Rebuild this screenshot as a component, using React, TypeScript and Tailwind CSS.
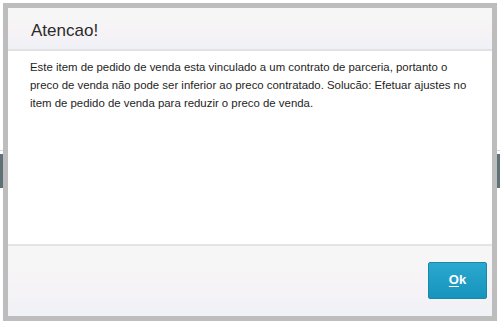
export default function App() {
  return (
    <div className="relative w-[500px] h-[324px] overflow-hidden bg-white font-['Liberation_Sans',Arial,sans-serif]">
      {/* page behind the modal */}
      <div className="flex flex-col pt-[150px]">
        <div className="h-px bg-[#d6d6d6]" />
        <div className="flex justify-between h-[34px] mt-[3px]">
          <div className="w-[4px] bg-[#5f7176]" />
          <div className="w-[4px] bg-[#5f7176]" />
        </div>
      </div>

      {/* modal */}
      <div className="absolute left-[3px] top-[3px] w-[494px] h-[318px] border-[5px] border-[#bdbdbd] bg-white flex flex-col">
        <div className="h-[43px] border-b-2 border-[#e2e2e4] bg-[linear-gradient(#f6f6f6_0%,#f6f6f6_30%,#f7f3f6_55%,#eff1f6_100%)] flex items-center pl-[23px] pt-[4px]">
          <span className="text-[17px] text-[#2b2b2b] leading-none">Atencao!</span>
        </div>
        <div className="flex-1 pl-[22px] pt-[7px] text-[11.4px] leading-[18px] text-[#1e1e1e] whitespace-nowrap">
          Este item de pedido de venda esta vinculado a um contrato de parceria, portanto o
          <br />
          preco de venda não pode ser inferior ao preco contratado. Solucão: Efetuar ajustes no
          <br />
          item de pedido de venda para reduzir o preco de venda.
        </div>
        <div className="h-[72px] border-t-2 border-[#e4e4e4] bg-[linear-gradient(#f6f6f6_0%,#f6f6f6_25%,#f7f3f6_50%,#f0f2f7_100%)] flex items-center justify-end pr-[5px]">
          <button className="w-[59px] h-[37px] mb-[2px] rounded-[2px] border border-[#1a87a8] bg-[linear-gradient(#2ba8cf,#1794bb)] text-white text-[13px] font-bold">
            <span className="underline underline-offset-2">O</span>k
          </button>
        </div>
      </div>
    </div>
  );
}
